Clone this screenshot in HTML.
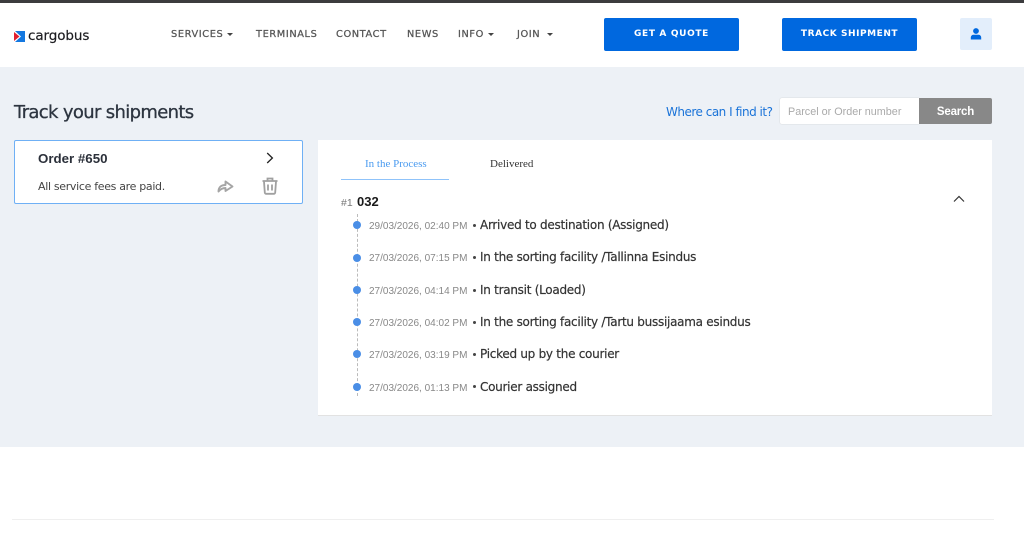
<!DOCTYPE html>
<html><head><meta charset="utf-8"><style>
html,body{margin:0;padding:0;width:1024px;height:545px;overflow:hidden;background:#fff}
.a{position:absolute;white-space:nowrap;line-height:1}
.n{font:9.8px "DejaVu Sans",sans-serif;letter-spacing:.6px;color:#555;top:29px;-webkit-text-stroke:.25px #555}
.c{width:0;height:0;border:3.5px solid transparent;border-top:3.5px solid #444;border-bottom:0;position:absolute;top:33px}
.b{position:absolute;top:18px;height:33px;background:#0068df;border-radius:2px;color:#fff;font:bold 9px/33px "DejaVu Sans",sans-serif;text-align:center}
.d{position:absolute;left:353px;width:8px;height:8px;border-radius:50%;background:#4a8ee6}
.t{font:10px "Liberation Sans",sans-serif;color:#888;left:369px}
.e{font:12px "DejaVu Sans",sans-serif;color:#333;left:480px;letter-spacing:-.27px;-webkit-text-stroke:.2px #333}
.p{position:absolute;left:472.500px;width:3px;height:3px;border-radius:50%;background:#444}
</style></head><body>
<div class="a" style="left:0;top:0;width:1024px;height:3px;background:#3c3c3e"></div>
<div class="a" style="left:0;top:67px;width:1024px;height:380px;background:#edf1f6"></div>
<svg class="a" style="left:14px;top:31px" width="11" height="11" viewBox="0 0 11 11"><rect x="1" width="10" height="11" fill="#1478e0"/><path d="M1 0l6 5.500-6 5.500z" fill="#fff"/><path d="M0 1l5.500 4.500L0 10z" fill="#e02030"/></svg>
<div class="a" style="left:28px;top:28px;font:13.500px 'DejaVu Sans',sans-serif;color:#1c1c20;letter-spacing:-.08px;-webkit-text-stroke:.2px #1c1c20">cargobus</div>
<div class="a n" style="left:171px">SERVICES</div><i class="c" style="left:227px"></i>
<div class="a n" style="left:256px">TERMINALS</div>
<div class="a n" style="left:336px">CONTACT</div>
<div class="a n" style="left:407px">NEWS</div>
<div class="a n" style="left:458px">INFO</div><i class="c" style="left:488px"></i>
<div class="a n" style="left:517px">JOIN</div><i class="c" style="left:547px"></i>
<div class="b" style="left:604px;width:135px;letter-spacing:.65px">GET A QUOTE</div>
<div class="b" style="left:782px;width:135px;letter-spacing:.55px">TRACK SHIPMENT</div>
<div class="a" style="left:960px;top:18px;width:32px;height:32px;background:#e3eefb;border-radius:2px"></div>
<svg class="a" style="left:970px;top:28px" width="12" height="12" viewBox="0 0 12 12"><circle cx="6" cy="3" r="2.900" fill="#0068df"/><path d="M.8 11.500V9.600C.8 7.800 2.200 6.800 3.600 6.800h4.800c1.400 0 2.800 1 2.800 2.800v1.900z" fill="#0068df"/></svg>

<div class="a" style="left:14px;top:102px;font:18px 'DejaVu Sans',sans-serif;color:#2d3540;letter-spacing:-.66px;-webkit-text-stroke:.3px #2d3540">Track your shipments</div>
<div class="a" style="left:666px;top:105px;font:12px 'DejaVu Sans',sans-serif;color:#1a73d8;letter-spacing:-.5px">Where can I find it?</div>
<div class="a" style="left:780px;top:98px;width:139px;height:26px;background:#fff;border-radius:2px 0 0 2px;box-shadow:0 0 1px #bbb"></div>
<div class="a" style="left:788px;top:106px;font:10.800px 'Liberation Sans',sans-serif;color:#aaa">Parcel or Order number</div>
<div class="a" style="left:919px;top:98px;width:73px;height:26px;background:#888;border-radius:0 2px 2px 0;color:#fff;font:bold 11.500px/28px 'Liberation Sans',sans-serif;text-align:center;letter-spacing:-.2px">Search</div>

<div class="a" style="left:14px;top:140px;width:287px;height:62px;background:#fff;border:1px solid #6fb0f5;border-radius:2px"></div>
<div class="a" style="left:38px;top:151px;font:bold 13.300px 'Liberation Sans',sans-serif;color:#2b303a">Order #650</div>
<div class="a" style="left:38px;top:180px;font:11px 'DejaVu Sans',sans-serif;color:#444;letter-spacing:-.32px">All service fees are paid.</div>
<svg class="a" style="left:264px;top:152px" width="12" height="12" viewBox="0 0 12 12"><path d="M3.200 1l5.200 5-5.200 5" fill="none" stroke="#222" stroke-width="1.300"/></svg>
<svg class="a" style="left:217px;top:178px" width="18" height="16" viewBox="0 0 18 16"><path d="M1.500 13.500c0-4 2.500-6.500 7-6.500V3.500l7 5-7 4.500v-3c-3 0-5 1-7 3.500z" fill="none" stroke="#a5a5a5" stroke-width="1.900" stroke-linejoin="round"/></svg>
<svg class="a" style="left:261px;top:177px" width="18" height="18" viewBox="0 0 18 18"><path d="M1.500 4h15M6.500 3.500V1.500h5v2M3 4.500l.8 11a1.500 1.500 0 0 0 1.500 1.300h7.400a1.500 1.500 0 0 0 1.500-1.300l.8-11M7 7.500v6M11 7.500v6" fill="none" stroke="#a0a0a0" stroke-width="1.800"/></svg>

<div class="a" style="left:318px;top:140px;width:674px;height:275px;background:#fff;border-bottom:1px solid #e2e2e2"></div>
<div class="a" style="left:365px;top:158px;font:11px 'Liberation Serif',serif;color:#4a9bf0">In the Process</div>
<div class="a" style="left:490px;top:158px;font:11px 'Liberation Serif',serif;color:#333">Delivered</div>
<div class="a" style="left:341px;top:179px;width:108px;height:1px;background:#8fc3fa"></div>
<div class="a" style="left:341px;top:197px;font:10.500px 'Liberation Sans',sans-serif;color:#777">#1</div>
<div class="a" style="left:357px;top:194px;font:bold 13px 'Liberation Sans',sans-serif;color:#1a1a1a">032</div>
<svg class="a" style="left:953px;top:195px" width="12" height="8" viewBox="0 0 12 8"><path d="M1 6.500l5-5 5 5" fill="none" stroke="#333" stroke-width="1.200"/></svg>
<div class="a" style="left:357px;top:214px;height:182px;border-left:1px dashed #bbb"></div>

<div class="d" style="top:221px"></div><div class="d" style="top:254px"></div><div class="d" style="top:286px"></div><div class="d" style="top:318px"></div><div class="d" style="top:350px"></div><div class="d" style="top:383px"></div>
<div class="a t" style="top:221px">29/03/2026, 02:40 PM</div><i class="p" style="top:224px"></i><div class="a e" style="top:218px">Arrived to destination (Assigned)</div>
<div class="a t" style="top:253px">27/03/2026, 07:15 PM</div><i class="p" style="top:256px"></i><div class="a e" style="top:250px">In the sorting facility /Tallinna Esindus</div>
<div class="a t" style="top:286px">27/03/2026, 04:14 PM</div><i class="p" style="top:289px"></i><div class="a e" style="top:283px">In transit (Loaded)</div>
<div class="a t" style="top:318px">27/03/2026, 04:02 PM</div><i class="p" style="top:321px"></i><div class="a e" style="top:315px">In the sorting facility /Tartu bussijaama esindus</div>
<div class="a t" style="top:350px">27/03/2026, 03:19 PM</div><i class="p" style="top:353px"></i><div class="a e" style="top:347px">Picked up by the courier</div>
<div class="a t" style="top:383px">27/03/2026, 01:13 PM</div><i class="p" style="top:385px"></i><div class="a e" style="top:380px">Courier assigned</div>

<div class="a" style="left:12px;top:519px;width:982px;height:1px;background:#efefef"></div>
</body></html>
